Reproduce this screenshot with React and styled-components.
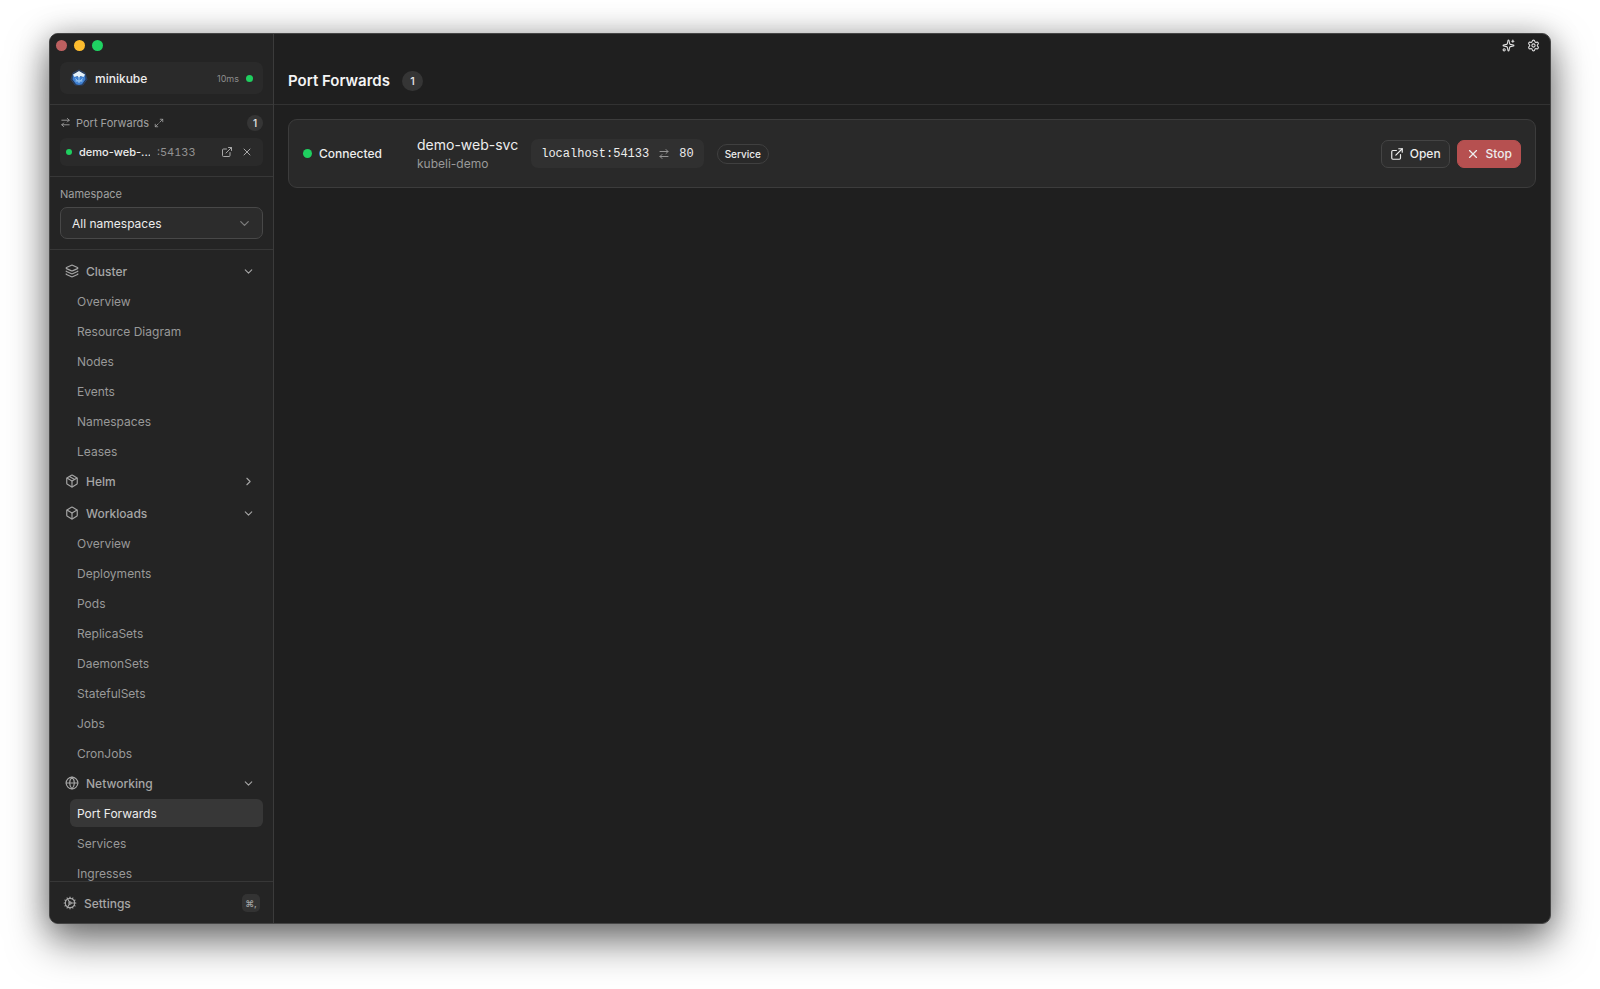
import React from "react";
import styled, { createGlobalStyle } from "styled-components";
import {
  ArrowRightLeft,
  Box,
  ChevronDown,
  ChevronRight,
  Cog,
  ExternalLink,
  Globe,
  Layers,
  Maximize2,
  Package,
  Settings,
  Sparkles,
  X,
} from "lucide-react";

const sans = `Inter, "Liberation Sans", sans-serif`;
const mono = `"Liberation Mono", monospace`;

const GlobalStyle = createGlobalStyle`
  *, *::before, *::after { box-sizing: border-box; }
  body { margin: 0; background: #fff; font-family: ${sans}; overflow: hidden; }
  h1, ul, p { margin: 0; padding: 0; }
  ul { list-style: none; }
  button { font: inherit; color: inherit; background: none; border: 0; padding: 0; display: flex; align-items: center; }
  svg { flex: none; display: block; }
`;

const Desktop = styled.div`
  height: 100vh;
  padding: 33px 49px 65px;
  display: flex;
`;

const Window = styled.div`
  flex: 1;
  min-width: 0;
  display: flex;
  overflow: hidden;
  border: 1px solid #454545;
  border-radius: 9px;
  background: #1f1f1f;
  color: #ededed;
  box-shadow: 0 18px 40px rgba(0, 0, 0, 0.5), 0 2px 30px rgba(0, 0, 0, 0.25);
`;

const Sidebar = styled.aside`
  width: 224px;
  flex: none;
  display: flex;
  flex-direction: column;
  background: #242424;
  border-right: 1px solid #3b3b3b;
`;

const Lights = styled.div`
  display: flex;
  gap: 7px;
  padding: 6px 6px 0;
`;

const Light = styled.span`
  width: 11px;
  height: 11px;
  border-radius: 50%;
  background: ${(p) => p.$color};
`;

const Dot = styled.span`
  flex: none;
  width: ${(p) => p.$size}px;
  height: ${(p) => p.$size}px;
  border-radius: 50%;
  background: #1fcf5f;
`;

const ClusterArea = styled.div`
  padding: 11px 10px 10px;
  border-bottom: 1px solid #373737;
`;

const ClusterButton = styled.button`
  && {
    width: 100%;
    height: 32px;
    padding: 0 10px;
    gap: 7px;
    border-radius: 7px;
    background: #2a2a2a;
    font-size: 12px;
    font-weight: 500;
  }
`;

const Latency = styled.span`
  margin-left: auto;
  font-size: 9px;
  font-weight: 400;
  color: #8c8c8c;
`;

const ForwardArea = styled.section`
  padding: 9px 10px 10px;
  border-bottom: 1px solid #373737;
`;

const ForwardHeading = styled.div`
  display: flex;
  align-items: center;
  height: 17px;
  gap: 5px;
  margin-bottom: 7px;
  font-size: 11px;
  color: #a0a0a0;
`;

const CountBadge = styled.span`
  display: grid;
  place-items: center;
  min-width: ${(p) => (p.$large ? 21 : 16)}px;
  height: ${(p) => (p.$large ? 20 : 16)}px;
  margin-left: ${(p) => (p.$large ? "0" : "auto")};
  border-radius: 10px;
  background: #353535;
  color: #e8e8e8;
  font-size: ${(p) => (p.$large ? 11 : 10)}px;
  font-weight: 500;
`;

const ForwardRow = styled.div`
  display: flex;
  align-items: center;
  height: 28px;
  padding: 0 10px 0 6px;
  gap: 7px;
  border-radius: 6px;
  background: #2a2a2a;
  font-size: 11px;
`;

const ForwardName = styled.span`
  width: 71px;
  overflow: hidden;
  white-space: nowrap;
  font-weight: 500;
`;

const ForwardPort = styled.span`
  font-variant-numeric: tabular-nums;
  color: #929292;
`;

const RowActions = styled.div`
  display: flex;
  gap: 8px;
  margin-left: auto;
  color: #a8a8a8;
`;

const NamespaceArea = styled.div`
  padding: 10px;
  border-bottom: 1px solid #373737;
`;

const FieldLabel = styled.label`
  display: block;
  margin-bottom: 5px;
  font-size: 11px;
  line-height: 15px;
  color: #a0a0a0;
`;

const SelectBox = styled.div`
  display: grid;
  align-items: center;
  & > * { grid-area: 1 / 1; }
  & > svg { justify-self: end; margin-right: 11px; color: #7d7d7d; pointer-events: none; }
`;

const Select = styled.select`
  appearance: none;
  width: 100%;
  height: 32px;
  padding: 0 11px;
  border: 1px solid #484848;
  border-radius: 7px;
  background: #2c2c2c;
  color: #ededed;
  font-family: ${sans};
  font-size: 12px;
`;

const Nav = styled.nav`
  flex: 1;
  min-height: 0;
  overflow: hidden;
  padding: 5px 10px 0;
  color: #a6a6a6;
  font-size: 12px;
`;

const GroupButton = styled.button`
  && {
    width: 100%;
    height: 32px;
    padding: 0 8px 0 5px;
    gap: 7px;
    font-weight: 500;
  }
  & > :last-child { margin-left: auto; }
`;

const NavList = styled.ul`
  display: flex;
  flex-direction: column;
  gap: 2px;
  padding-left: 10px;
`;

const NavLink = styled.a`
  display: flex;
  align-items: center;
  height: 28px;
  padding: 0 7px;
  border-radius: 6px;
  text-decoration: none;
  color: ${(p) => (p.$active ? "#ededed" : "#999")};
  background: ${(p) => (p.$active ? "#373737" : "transparent")};
`;

const SidebarFooter = styled.div`
  padding: 5px 13px 4px 13px;
  border-top: 1px solid #373737;
`;

const SettingsButton = styled.button`
  && {
    width: 100%;
    height: 32px;
    gap: 7px;
    font-size: 12px;
    font-weight: 500;
    color: #a6a6a6;
  }
`;

const Shortcut = styled.kbd`
  display: grid;
  place-items: center;
  width: 18px;
  height: 18px;
  margin-left: auto;
  border-radius: 5px;
  background: #333;
  font-family: ${sans};
  font-size: 9px;
`;

const Main = styled.main`
  flex: 1;
  min-width: 0;
  display: flex;
  flex-direction: column;
`;

const TitleBar = styled.div`
  display: flex;
  justify-content: flex-end;
  align-items: center;
  height: 23px;
  padding: 0 10px;
  gap: 12px;
  color: #dedede;
`;

const PageHeader = styled.header`
  display: flex;
  align-items: center;
  gap: 12px;
  height: 48px;
  padding: 0 14px;
  border-bottom: 1px solid #323232;
`;

const PageTitle = styled.h1`
  font-size: 15px;
  font-weight: 600;
  color: #f4f4f4;
`;

const Content = styled.div`
  padding: 14px;
`;

const Card = styled.article`
  display: flex;
  align-items: center;
  height: 69px;
  padding: 0 14px;
  gap: 13px;
  border: 1px solid #3c3c3c;
  border-radius: 9px;
  background: #292929;
  font-size: 12px;
`;

const Status = styled.div`
  display: flex;
  align-items: center;
  width: 101px;
  gap: 7px;
  font-weight: 500;
`;

const ServiceName = styled.p`
  font-size: 14px;
  line-height: 20px;
`;

const ServiceNamespace = styled.p`
  font-size: 12px;
  line-height: 17px;
  color: #999;
`;

const Mapping = styled.div`
  display: flex;
  align-items: center;
  height: 29px;
  padding: 0 10px;
  gap: 9px;
  border-radius: 7px;
  background: #303030;
  font-family: ${mono};
  & > svg { color: #929292; }
`;

const KindTag = styled.span`
  display: flex;
  align-items: center;
  height: 20px;
  padding: 0 7px;
  border: 1px solid #404040;
  border-radius: 10px;
  font-size: 10px;
  font-weight: 500;
`;

const Actions = styled.div`
  display: flex;
  gap: 7px;
  margin-left: auto;
`;

const ActionButton = styled.button`
  && {
    height: 28px;
    padding: 0 8px;
    gap: 6px;
    border: 1px solid ${(p) => (p.$danger ? "#b65050" : "#444")};
    border-radius: 7px;
    background: ${(p) => (p.$danger ? "#b65050" : "#2d2d2d")};
    font-weight: 500;
  }
`;

const groups = [
  {
    name: "Cluster",
    icon: Layers,
    items: ["Overview", "Resource Diagram", "Nodes", "Events", "Namespaces", "Leases"],
  },
  { name: "Helm", icon: Package, items: [] },
  {
    name: "Workloads",
    icon: Box,
    items: ["Overview", "Deployments", "Pods", "ReplicaSets", "DaemonSets", "StatefulSets", "Jobs", "CronJobs"],
  },
  { name: "Networking", icon: Globe, items: ["Port Forwards", "Services", "Ingresses"] },
];

function MinikubeLogo() {
  return (
    <svg width="18" height="18" viewBox="0 0 18 18" aria-hidden="true">
      <path d="M9 1 15 4 17 10.500 12.800 16H5.200L1 10.500 3 4Z" fill="#21334f" stroke="#35558a" strokeWidth=".6" />
      <path d="M3 5.500 9 8.200 15 5.500 15.500 10.500 12 15.200 9 16 6 15.200 2.500 10.500Z" fill="#3f80d2" />
      <path d="M3 5.500 9 2 15 5.500 13.500 8 10.800 7 9 8.500 7.200 7 4.500 8Z" fill="#e4f1fa" />
      <path d="M9 8V14M5.500 9.500 7.500 12M12.500 9.500 10.500 12M5.500 12H12.500" stroke="#a9d2f5" strokeWidth=".9" />
    </svg>
  );
}

function NavGroup({ group }) {
  const Icon = group.icon;
  const open = group.items.length > 0;
  return (
    <section>
      <GroupButton type="button" aria-expanded={open}>
        <Icon size={14} />
        {group.name}
        {open ? <ChevronDown size={13} /> : <ChevronRight size={13} />}
      </GroupButton>
      {open && (
        <NavList>
          {group.items.map((item) => (
            <li key={item}>
              <NavLink href="#" $active={item === "Port Forwards"}>{item}</NavLink>
            </li>
          ))}
        </NavList>
      )}
    </section>
  );
}

export default function App() {
  return (
    <>
      <GlobalStyle />
      <Desktop>
        <Window>
          <Sidebar>
            <Lights>
              <Light $color="#bd6060" />
              <Light $color="#fdbc2e" />
              <Light $color="#1fd262" />
            </Lights>
            <ClusterArea>
              <ClusterButton type="button">
                <MinikubeLogo />
                minikube
                <Latency>10ms</Latency>
                <Dot $size={7} />
              </ClusterButton>
            </ClusterArea>
            <ForwardArea>
              <ForwardHeading>
                <ArrowRightLeft size={11} />
                Port Forwards
                <Maximize2 size={10} />
                <CountBadge>1</CountBadge>
              </ForwardHeading>
              <ForwardRow>
                <Dot $size={6} />
                <ForwardName>demo-web-...</ForwardName>
                <ForwardPort>:54133</ForwardPort>
                <RowActions>
                  <button type="button" aria-label="Open in browser"><ExternalLink size={12} /></button>
                  <button type="button" aria-label="Stop forward"><X size={12} /></button>
                </RowActions>
              </ForwardRow>
            </ForwardArea>
            <NamespaceArea>
              <FieldLabel htmlFor="namespace">Namespace</FieldLabel>
              <SelectBox>
                <Select id="namespace">
                  <option>All namespaces</option>
                </Select>
                <ChevronDown size={15} />
              </SelectBox>
            </NamespaceArea>
            <Nav>
              {groups.map((group) => (
                <NavGroup key={group.name} group={group} />
              ))}
            </Nav>
            <SidebarFooter>
              <SettingsButton type="button">
                <Cog size={14} />
                Settings
                <Shortcut>⌘,</Shortcut>
              </SettingsButton>
            </SidebarFooter>
          </Sidebar>
          <Main>
            <TitleBar>
              <button type="button" aria-label="Assistant"><Sparkles size={13} /></button>
              <button type="button" aria-label="Preferences"><Settings size={13} /></button>
            </TitleBar>
            <PageHeader>
              <PageTitle>Port Forwards</PageTitle>
              <CountBadge $large>1</CountBadge>
            </PageHeader>
            <Content>
              <Card>
                <Status>
                  <Dot $size={9} />
                  Connected
                </Status>
                <div>
                  <ServiceName>demo-web-svc</ServiceName>
                  <ServiceNamespace>kubeli-demo</ServiceNamespace>
                </div>
                <Mapping>
                  <span>localhost:54133</span>
                  <ArrowRightLeft size={12} />
                  <span>80</span>
                </Mapping>
                <KindTag>Service</KindTag>
                <Actions>
                  <ActionButton type="button"><ExternalLink size={14} />Open</ActionButton>
                  <ActionButton type="button" $danger><X size={14} />Stop</ActionButton>
                </Actions>
              </Card>
            </Content>
          </Main>
        </Window>
      </Desktop>
    </>
  );
}
